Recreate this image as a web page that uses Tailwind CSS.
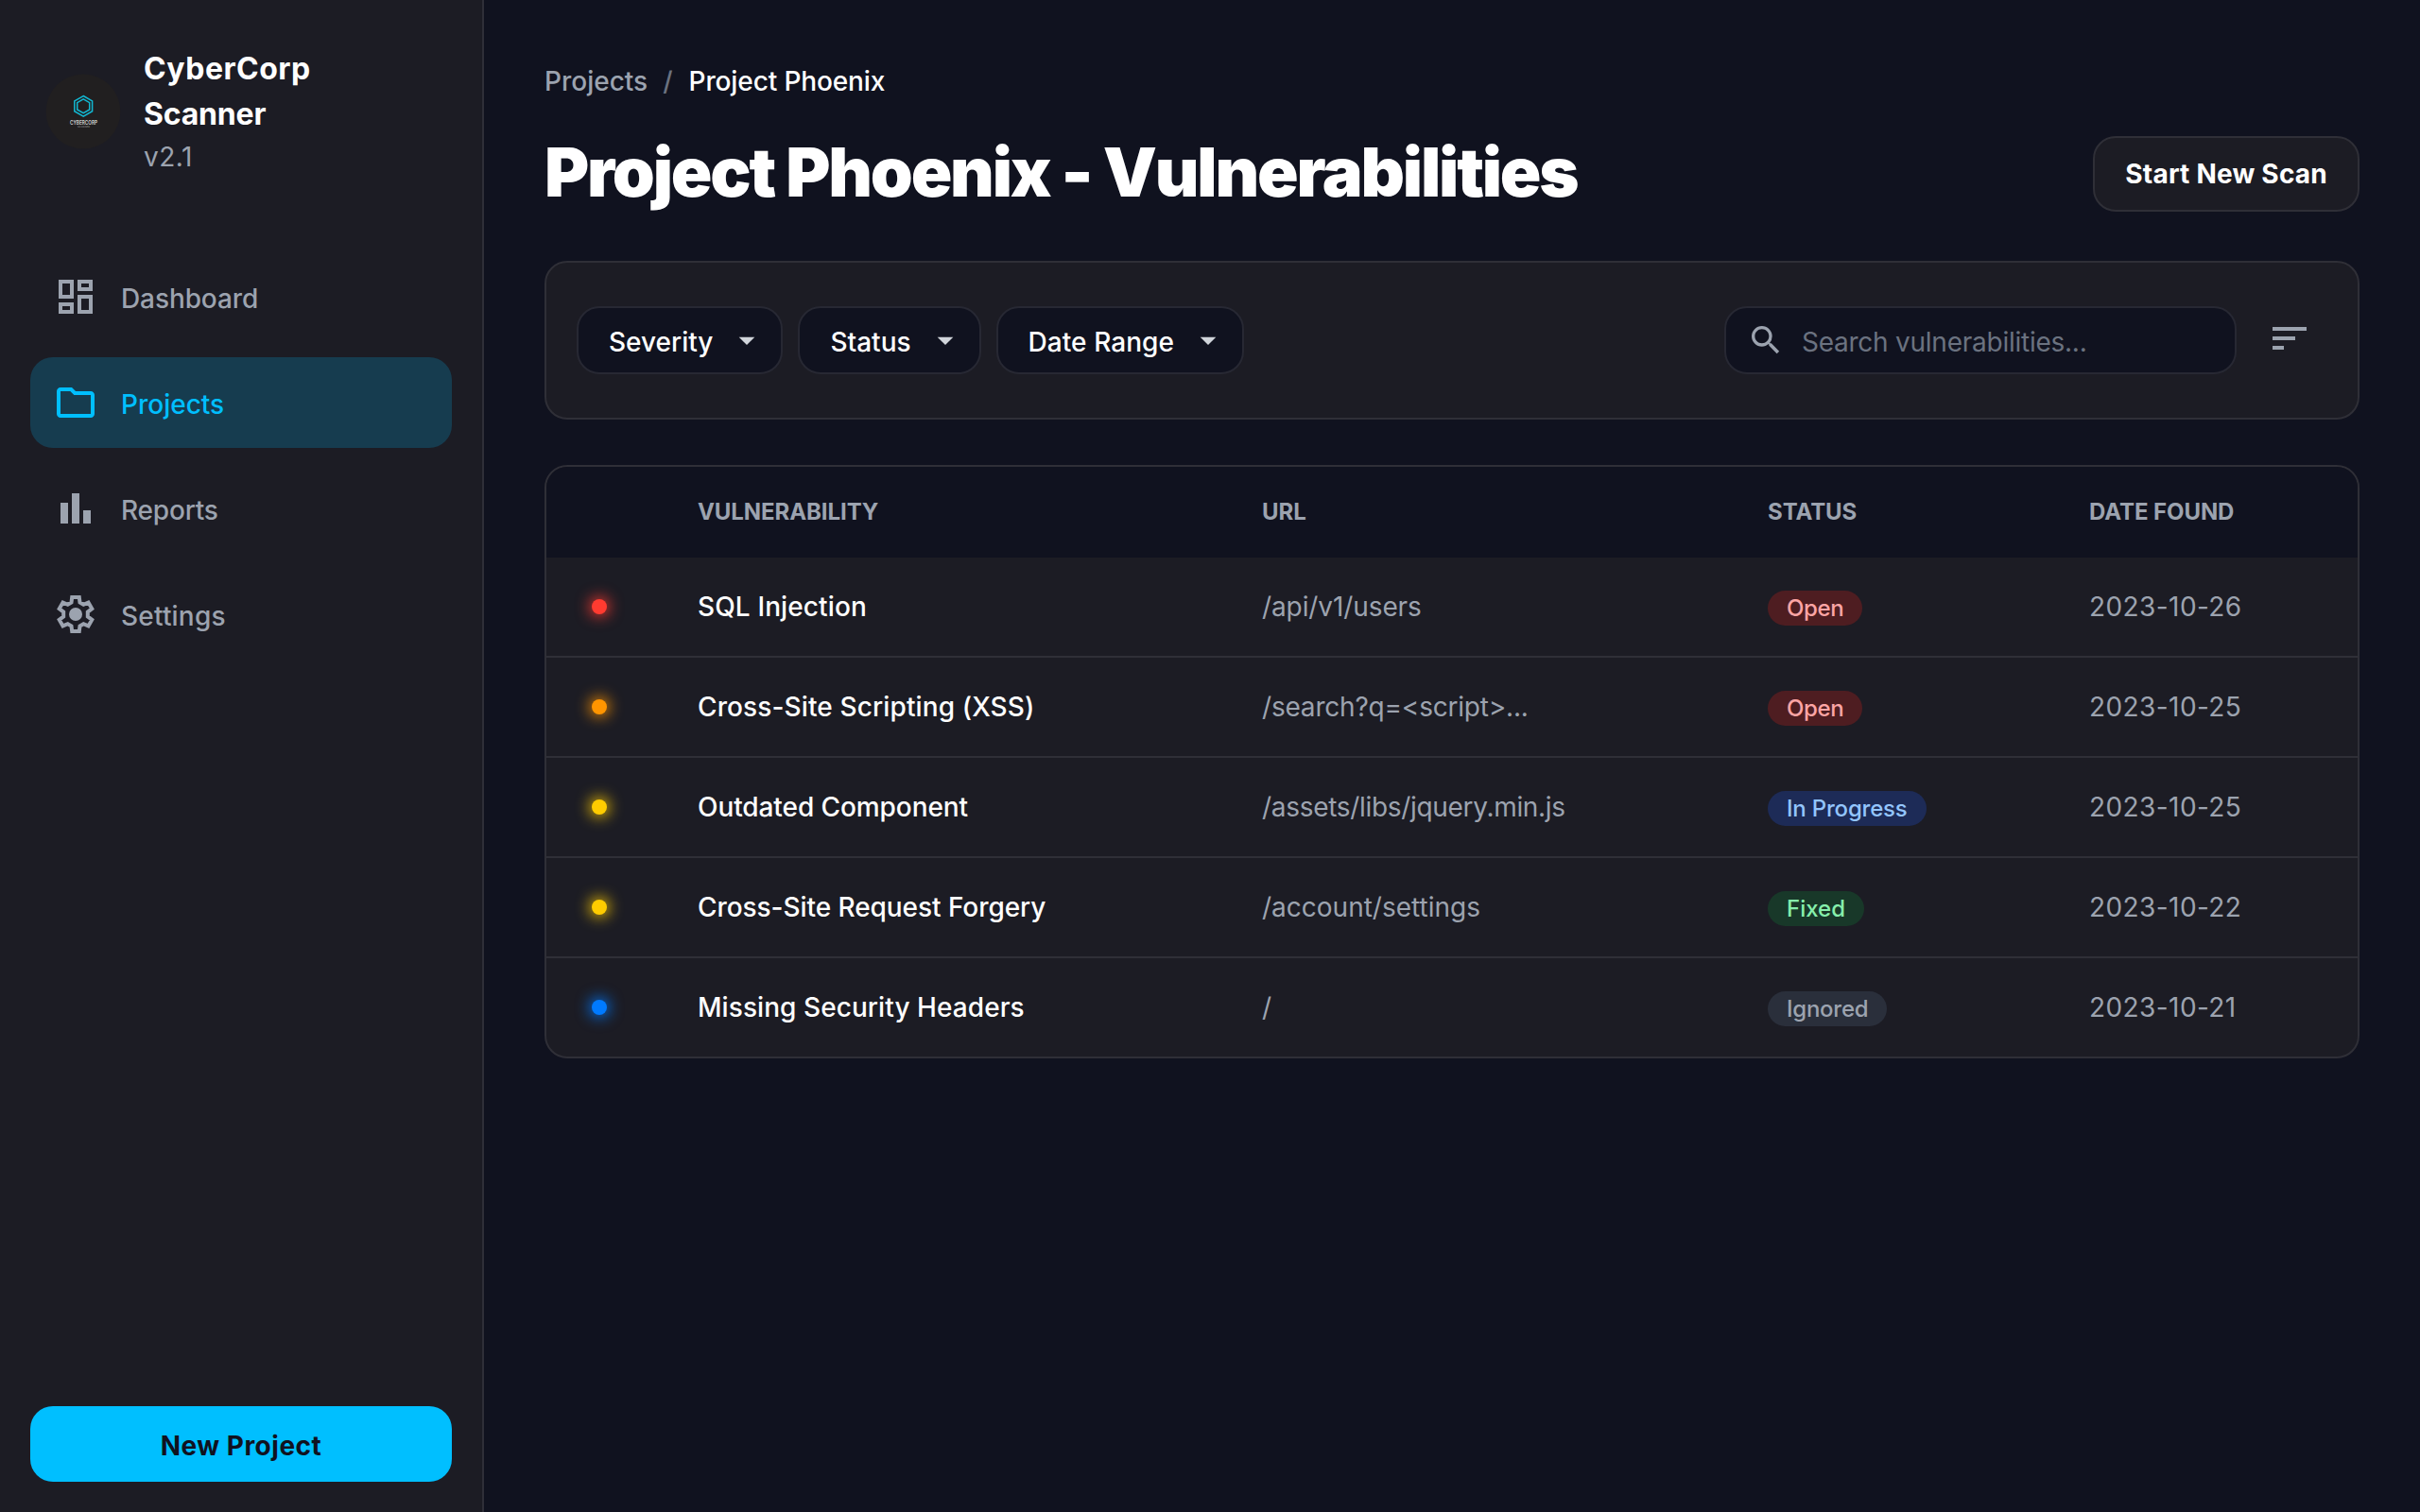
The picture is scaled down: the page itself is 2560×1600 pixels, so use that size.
<!DOCTYPE html>
<html lang="en">
<head>
<meta charset="utf-8">
<title>CyberCorp Scanner</title>
<script src="https://cdn.jsdelivr.net/npm/@tailwindcss/browser@4"></script>
</head>
<body class="flex h-screen overflow-hidden bg-[#10121f] font-['Inter',sans-serif] text-[28px] leading-[42px] text-white">

<aside class="flex w-[512px] shrink-0 flex-col justify-between border-r-2 border-[#2f2f38] bg-[#1c1c24] p-8">
  <div class="flex flex-col gap-16">
    <div class="flex items-center gap-6 px-4 pt-[17px]">
      <svg class="size-20 shrink-0" viewBox="0 0 80 80">
        <circle cx="40" cy="40" r="39.5" fill="#211f20"/>
        <g fill="none" stroke="#12b8d2" stroke-width="1.5">
          <path d="M40.200 23.500l9.400 5.400v10.800l-9.400 5.400-9.400-5.400V28.900z"/>
          <path d="M40.200 26.900l6.500 3.700v7.400l-6.500 3.700-6.500-3.700v-7.400z"/>
        </g>
        <text x="40.500" y="54.300" text-anchor="middle" font-size="5.800" font-weight="600" textLength="29" lengthAdjust="spacingAndGlyphs" fill="#d4d4d4">CYBERCORP</text>
        <text x="40.500" y="57" text-anchor="middle" font-size="2.600" textLength="13" fill="#9a9a9a">SCANNER</text>
      </svg>
      <div>
        <h1 class="w-[200px] text-[32px] leading-[48px] font-bold"><span class="tracking-[0.5px]">CyberCorp</span> <span class="tracking-[-0.2px]">Scanner</span></h1>
        <p class="tracking-[0.5px] text-[#9ca3af]">v2.1</p>
      </div>
    </div>
    <nav class="flex flex-col gap-4 pt-[15px] font-medium text-[#9ca3af]">
      <a class="flex h-24 items-center gap-6 rounded-3xl px-6">
        <svg class="size-12" viewBox="0 0 24 24" fill="currentColor"><path d="M19 5v2h-4V5h4M9 5v6H5V5h4m10 8v6h-4v-6h4M9 17v2H5v-2h4M21 3h-8v6h8V3zM11 3H3v10h8V3zm10 8h-8v10h8V11zm-10 4H3v6h8v-6z"/></svg>
        <span class="pt-1 tracking-[-0.1px]">Dashboard</span>
      </a>
      <a class="flex h-24 items-center gap-6 rounded-3xl bg-[#00bfff]/20 px-6 text-[#00bfff]">
        <svg class="size-12" viewBox="0 0 24 24" fill="currentColor"><path d="M9.170 6l2 2H20v10H4V6h5.170M10 4H4c-1.100 0-1.990.9-1.990 2L2 18c0 1.100.9 2 2 2h16c1.100 0 2-.9 2-2V8c0-1.100-.9-2-2-2h-8l-2-2z"/></svg>
        <span class="pt-1">Projects</span>
      </a>
      <a class="flex h-24 items-center gap-6 rounded-3xl px-6">
        <svg class="size-12" viewBox="0 0 24 24" fill="currentColor"><path d="M4 9h4v11H4zM10 4h4v16h-4zM16 13h4v7h-4z"/></svg>
        <span class="pt-1 tracking-[-0.2px]">Reports</span>
      </a>
      <a class="flex h-24 items-center gap-6 rounded-3xl px-6">
        <svg class="size-12" viewBox="0 0 24 24"><path fill="none" stroke="currentColor" stroke-width="2" d="M10.100 3h3.800l.35 2.800 1.900 1.100 2.600-1.100 1.900 3.300-2.250 1.700v2.400l2.250 1.700-1.900 3.300-2.600-1.100-1.900 1.100-.35 2.800h-3.800l-.35-2.800-1.900-1.100-2.600 1.100-1.900-3.300 2.250-1.700v-2.400L3.350 9.100l1.900-3.300 2.600 1.100 1.900-1.100z"/><circle cx="12" cy="12" r="3.500" fill="currentColor"/></svg>
        <span class="pt-1 tracking-[0.2px]">Settings</span>
      </a>
    </nav>
  </div>
  <button class="flex h-20 items-center justify-center rounded-3xl bg-[#00bfff] font-bold tracking-[0.5px] text-[#10121f]"><span class="pt-1">New Project</span></button>
</aside>

<main class="flex min-w-0 flex-1 flex-col px-16 pt-16">
  <div class="flex pt-px font-medium">
    <span class="text-[#9ca3af]">Projects</span>
    <span class="pr-[17px] pl-4 text-[#6b7280]">/</span>
    <span class="tracking-[-0.12px]">Project Phoenix</span>
  </div>
  <div class="mt-[37px] flex h-20 items-center justify-between">
    <h2 class="pb-[5px] text-[72px] leading-[90px] font-black tracking-[-2.190px] whitespace-nowrap">Project Phoenix - Vulnerabilities</h2>
    <button class="flex h-20 items-center rounded-3xl border-2 border-[#2f2f37] bg-[#1c1c24] px-8 font-bold tracking-[0.22px] whitespace-nowrap">Start New Scan</button>
  </div>

  <section class="mt-[52px] flex h-[168px] items-center justify-between rounded-3xl border-2 border-[#2f2f37] bg-[#1c1c24] px-8">
    <div class="flex gap-4 font-medium">
      <button class="flex h-[72px] items-center gap-4 rounded-3xl border-2 border-[#272833] bg-[#10121f] pr-4 pl-8"><span class="pt-1">Severity</span><svg class="size-10 fill-[#d1d5db]" viewBox="0 0 24 24"><path d="M7 10l5 5 5-5z"/></svg></button>
      <button class="flex h-[72px] items-center gap-4 rounded-3xl border-2 border-[#272833] bg-[#10121f] pr-4 pl-8"><span class="pt-1">Status</span><svg class="size-10 fill-[#d1d5db]" viewBox="0 0 24 24"><path d="M7 10l5 5 5-5z"/></svg></button>
      <button class="flex h-[72px] items-center gap-4 rounded-3xl border-2 border-[#272833] bg-[#10121f] pr-4 pl-8"><span class="pt-1 tracking-[0.06px]">Date Range</span><svg class="size-10 fill-[#d1d5db]" viewBox="0 0 24 24"><path d="M7 10l5 5 5-5z"/></svg></button>
    </div>
    <div class="flex items-center gap-4">
      <label class="flex h-[72px] w-[542px] items-center gap-[18px] rounded-3xl border-2 border-[#272833] bg-[#10121f] pl-[22px]">
        <svg class="size-10 fill-[#9ca3af]" viewBox="0 0 24 24"><path d="M15.500 14h-.79l-.28-.27A6.470 6.470 0 0 0 16 9.500 6.500 6.500 0 1 0 9.500 16c1.610 0 3.090-.59 4.230-1.570l.27.28v.79l5 4.990L20.490 19l-4.990-5zm-6 0C7.010 14 5 11.990 5 9.500S7.010 5 9.500 5 14 7.010 14 9.500 11.990 14 9.500 14z"/></svg>
        <span class="pt-1 tracking-[-0.25px] text-[#6b7280]">Search vulnerabilities...</span>
      </label>
      <button class="px-4 pb-1"><svg class="size-12 fill-[#9ca3af]" viewBox="0 0 24 24"><path d="M3 18h6v-2H3v2zM3 6v2h18V6H3zm0 7h12v-2H3v2z"/></svg></button>
    </div>
  </section>

  <section class="mt-12 overflow-hidden rounded-3xl border-2 border-[#2f2f37] bg-[#1c1c24]">
    <div class="grid h-24 grid-cols-[112px_597px_535px_340px_1fr] items-center bg-[#10121f] text-[24px] leading-8 font-bold tracking-[-0.08px] text-[#9ca3af] *:px-12">
      <div></div>
      <div>VULNERABILITY</div>
      <div>URL</div>
      <div>STATUS</div>
      <div>DATE FOUND</div>
    </div>
    <div class="divide-y-2 divide-[#2f2f37] text-[#9ca3af]">
      <div class="grid h-[106px] grid-cols-[112px_597px_535px_340px_1fr] items-center *:px-12">
        <div><div class="size-4 rounded-full bg-[#ff3b30] shadow-[0_0_16px_2px_#ff3b30]"></div></div>
        <div class="font-medium tracking-[0.12px] text-white">SQL Injection</div>
        <div class="tracking-[-0.1px]">/api/v1/users</div>
        <div><span class="relative top-px rounded-full bg-[#7f1d1d]/50 px-5 py-1 text-[24px] font-medium tracking-[-0.4px] text-[#fca5a5]">Open</span></div>
        <div class="tracking-[0.42px]">2023-10-26</div>
      </div>
      <div class="grid h-[106px] grid-cols-[112px_597px_535px_340px_1fr] items-center *:px-12">
        <div><div class="size-4 rounded-full bg-[#ff9500] shadow-[0_0_16px_2px_#ff9500]"></div></div>
        <div class="font-medium tracking-[0.12px] text-white">Cross-Site Scripting (XSS)</div>
        <div class="tracking-[-0.2px]">/search?q=&lt;script&gt;...</div>
        <div><span class="relative top-px rounded-full bg-[#7f1d1d]/50 px-5 py-1 text-[24px] font-medium tracking-[-0.4px] text-[#fca5a5]">Open</span></div>
        <div class="tracking-[0.42px]">2023-10-25</div>
      </div>
      <div class="grid h-[106px] grid-cols-[112px_597px_535px_340px_1fr] items-center *:px-12">
        <div><div class="size-4 rounded-full bg-[#ffcc00] shadow-[0_0_16px_2px_#ffcc00]"></div></div>
        <div class="font-medium tracking-[-0.08px] text-white">Outdated Component</div>
        <div class="tracking-[-0.31px]">/assets/libs/jquery.min.js</div>
        <div><span class="relative top-px rounded-full bg-[#1e3a8a]/50 px-5 py-1 text-[24px] font-medium tracking-[-0.2px] text-[#93c5fd]">In Progress</span></div>
        <div class="tracking-[0.42px]">2023-10-25</div>
      </div>
      <div class="grid h-[106px] grid-cols-[112px_597px_535px_340px_1fr] items-center *:px-12">
        <div><div class="size-4 rounded-full bg-[#ffcc00] shadow-[0_0_16px_2px_#ffcc00]"></div></div>
        <div class="font-medium tracking-[-0.06px] text-white">Cross-Site Request Forgery</div>
        <div>/account/settings</div>
        <div><span class="relative top-px rounded-full bg-[#14532d]/50 px-5 py-1 text-[24px] font-medium text-[#86efac]">Fixed</span></div>
        <div class="tracking-[0.42px]">2023-10-22</div>
      </div>
      <div class="grid h-[104px] grid-cols-[112px_597px_535px_340px_1fr] items-center *:px-12">
        <div><div class="size-4 rounded-full bg-[#007aff] shadow-[0_0_16px_2px_#007aff]"></div></div>
        <div class="font-medium tracking-[0.07px] text-white">Missing Security Headers</div>
        <div>/</div>
        <div><span class="relative top-px rounded-full bg-[#374151]/50 px-5 py-1 text-[24px] font-medium tracking-[-0.25px] text-[#9ca3af]">Ignored</span></div>
        <div class="tracking-[0.42px]">2023-10-21</div>
      </div>
    </div>
  </section>
</main>
</body>
</html>
